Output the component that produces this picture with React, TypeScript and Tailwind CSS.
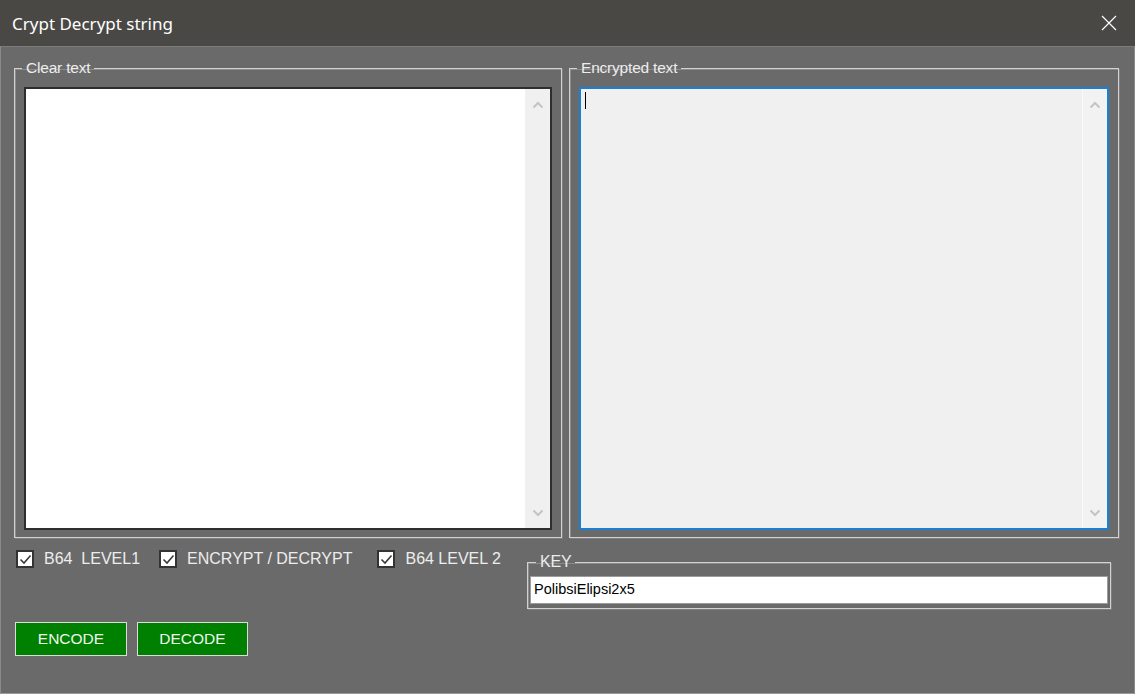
import React from "react";

const ui = { fontFamily: '"Liberation Sans", Arial, sans-serif' };

function ScrollTrack({ light }: { light?: boolean }) {
  return (
    <div
      className={`flex w-[25px] shrink-0 flex-col items-center justify-between py-[10px] ${
        light ? "bg-[#f0f0f0]" : "bg-[#f2f2f2] border-l border-[#fafafa]"
      }`}
    >
      <svg width="12" height="8" viewBox="0 0 12 8" className="mt-[2px]">
        <path d="M1.5 6.5 L6 2 L10.5 6.5" fill="none" stroke="#c4c4c4" strokeWidth="2" />
      </svg>
      <svg width="12" height="8" viewBox="0 0 12 8" className="mb-[1px]">
        <path d="M1.5 1.5 L6 6 L10.5 1.5" fill="none" stroke="#c4c4c4" strokeWidth="2" />
      </svg>
    </div>
  );
}

function Group({
  label,
  className,
  children,
  legendClass = "-ml-[2px] text-[15.5px]",
}: {
  label: string;
  className?: string;
  children: React.ReactNode;
  legendClass?: string;
}) {
  return (
    <fieldset
      className={`border border-[#d2d2d2] shadow-[inset_1px_1px_0_#8c8c8c,1px_1px_0_#7e7e7e] ${className ?? ""}`}
    >
      <legend className={`px-[4px] leading-[18px] tracking-[-0.2px] text-[#ededed] ${legendClass}`}>
        {label}
      </legend>
      {children}
    </fieldset>
  );
}

function Check({ label, className }: { label: string; className?: string }) {
  return (
    <label className={`flex items-center gap-[10px] ${className ?? ""}`}>
      <span className="flex h-[18px] w-[18px] items-center justify-center border-2 border-[#333] bg-white">
        <svg width="13" height="11" viewBox="0 0 13 11">
          <path d="M1.5 5.5 L5 9 L11.5 1.5" fill="none" stroke="#3a3a3a" strokeWidth="1.6" />
        </svg>
      </span>
      <span className="whitespace-pre text-[16px] leading-[18px] text-[#ededed]">{label}</span>
    </label>
  );
}

export default function App() {
  return (
    <div className="flex h-[694px] w-[1135px] flex-col bg-[#6a6a6a]" style={ui}>
      {/* barre de titre */}
      <div className="flex h-[46px] shrink-0 items-center justify-between bg-[#4a4845] pl-[12px] pr-[18px] pt-[2px]">
        <span
          className="text-[17px] text-white"
          style={{ fontFamily: '"Noto Sans", "Open Sans", sans-serif' }}
        >
          Crypt Decrypt string
        </span>
        <svg width="16" height="16" viewBox="0 0 16 16" className="-mt-[2px]">
          <path d="M1 1 L15 15 M15 1 L1 15" stroke="#ffffff" strokeWidth="1.2" />
        </svg>
      </div>

      {/* contenu */}
      <div className="flex flex-1 flex-col border border-t-[#7c7c7c] border-x-[#8a8a8a] border-b-[#9a9a9a] pl-[13px] pr-[14px] pt-[12px]">
        <div className="flex gap-[7px]">
          <Group label="Clear text" className="h-[479px] w-[548px] px-[9px] pb-[6px]">
            <div className="mt-[10px] flex h-[443px] border-2 border-[#2e2e2e] bg-white">
              <div className="flex-1" />
              <ScrollTrack light />
            </div>
          </Group>
          <Group label="Encrypted text" className="h-[479px] w-[550px] px-[9px] pb-[6px]">
            <div className="mt-[10px] flex h-[443px] border-2 border-[#1a7fd6] bg-[#f0f0f0]">
              <div className="flex-1 pl-[4px] pt-[3px]">
                <div className="h-[17px] w-[1px] bg-black" />
              </div>
              <ScrollTrack />
            </div>
          </Group>
        </div>

        <div className="mt-[12px] flex">
          <div className="flex w-[513px] flex-col">
            <div className="flex items-center">
              <Check label="B64  LEVEL1" className="ml-[2px]" />
              <Check label="ENCRYPT / DECRYPT" className="ml-[19px]" />
              <Check label="B64 LEVEL 2" className="ml-[25px]" />
            </div>
            <div className="mt-[54px] flex gap-[10px] pl-[1px]">
              <button className="h-[34px] w-[112px] border border-[#dcdcdc] bg-[#008000] text-[15.5px] text-[#eef7ee]">
                ENCODE
              </button>
              <button className="h-[34px] w-[111px] border border-[#dcdcdc] bg-[#008000] text-[15.5px] text-[#eef7ee]">
                DECODE
              </button>
            </div>
          </div>

          <Group
            label="KEY"
            legendClass="ml-[6px] text-[16px]"
            className="mt-[3px] h-[56px] w-[584px] px-[2px] pb-[3px]"
          >
            <div className="mt-[5px] flex h-[28px] items-center border border-[#9c9c9c] bg-white pl-[3px] text-[14.5px] text-black">
              PolibsiElipsi2x5
            </div>
          </Group>
        </div>
      </div>
    </div>
  );
}
